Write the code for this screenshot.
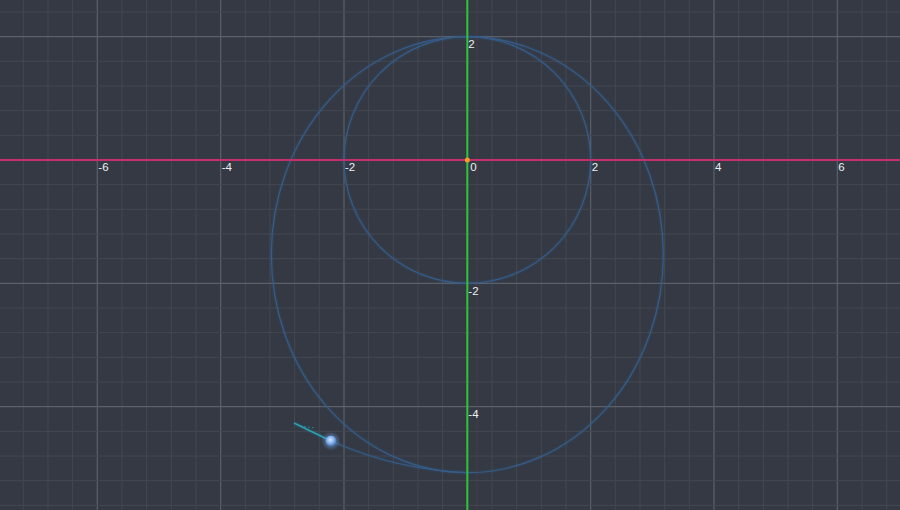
import React from 'react';

const OX = 467.33;
const OY = 160;
const U = 61.67;
const STEP = U * 0.4;

function Grid() {
  const lines = [];
  for (let k = -19; k <= 18; k++) {
    const x = OX + k * STEP;
    const major = k % 5 === 0;
    lines.push(
      <line key={'v' + k} x1={x} y1={0} x2={x} y2={510} stroke={major ? '#5b6069' : '#434852'} strokeWidth={major ? 1.2 : 1} />
    );
  }
  for (let k = -7; k <= 15; k++) {
    const y = OY + k * STEP;
    const major = k % 5 === 0;
    lines.push(
      <line key={'h' + k} x1={0} y1={y} x2={900} y2={y} stroke={major ? '#5b6069' : '#434852'} strokeWidth={major ? 1.2 : 1} />
    );
  }
  return <g>{lines}</g>;
}

const xLabels = [-6, -4, -2, 2, 4, 6];
const yLabels = [2, -2, -4];

export default function App() {
  return (
    <div className="w-[900px] h-[510px] bg-[#343943] overflow-hidden" style={{ fontFamily: '"Liberation Sans", Arial, sans-serif' }}>
      <svg width="900" height="510" viewBox="0 0 900 510" className="block">
        <defs>
          <radialGradient id="body" cx="0.45" cy="0.4" r="0.6">
            <stop offset="0" stopColor="#d8e8ff" />
            <stop offset="0.6" stopColor="#7aaae8" />
            <stop offset="1" stopColor="#4a7cc0" stopOpacity="0.6" />
          </radialGradient>
          <filter id="glow" x="-50%" y="-50%" width="200%" height="200%">
            <feGaussianBlur stdDeviation="1.2" />
          </filter>
        </defs>
        <Grid />
        <line x1={477} y1={0} x2={477} y2={510} stroke="#5a3c48" strokeWidth={1} opacity={0.6} />

        <g fill="none" stroke="#335a86" strokeWidth={1.2}>
          <circle cx={OX} cy={OY} r={123.3} />
          <ellipse cx={OX} cy={254.7} rx={196} ry={218} />
          <path d="M 331 441 C 372 459, 415 471, 468 472.5" />
        </g>
        <g fill="none" stroke="#3f6ea6" strokeWidth={3} opacity={0.18} filter="url(#glow)">
          <circle cx={OX} cy={OY} r={123.3} />
          <ellipse cx={OX} cy={254.7} rx={196} ry={218} />
          <path d="M 331 441 C 372 459, 415 471, 468 472.5" />
        </g>

        <line x1={0} y1={OY} x2={900} y2={OY} stroke="#c4306c" strokeWidth={2} />
        <line x1={OX} y1={0} x2={OX} y2={510} stroke="#2fc23a" strokeWidth={2} />

        <g fill="#eef0f3" fontSize="11.5">
          {xLabels.map((v) => (
            <text key={'x' + v} x={OX + v * U + 1} y={170.5}>{v}</text>
          ))}
          {yLabels.map((v) => (
            <text key={'y' + v} x={OX + 1} y={OY - v * U + 11.5}>{v}</text>
          ))}
          <text x={OX + 3} y={170.5}>0</text>
        </g>

        <circle cx={OX} cy={OY} r={2.5} fill="#f0a028" />

        <line x1={331} y1={441} x2={294} y2={423} stroke="#2aa6b8" strokeWidth={2.5} opacity={0.3} filter="url(#glow)" />
        <line x1={331} y1={441} x2={294} y2={423} stroke="#2c9fb2" strokeWidth={1.5} />
        <line x1={300} y1={426} x2={316} y2={428} stroke="#2aa6b8" strokeWidth={1} strokeDasharray="2 2" opacity={0.6} />
        <circle cx={331} cy={441} r={8} fill="#6a9ee0" opacity={0.35} filter="url(#glow)" />
        <circle cx={331} cy={441} r={5.5} fill="url(#body)" />
      </svg>
    </div>
  );
}
